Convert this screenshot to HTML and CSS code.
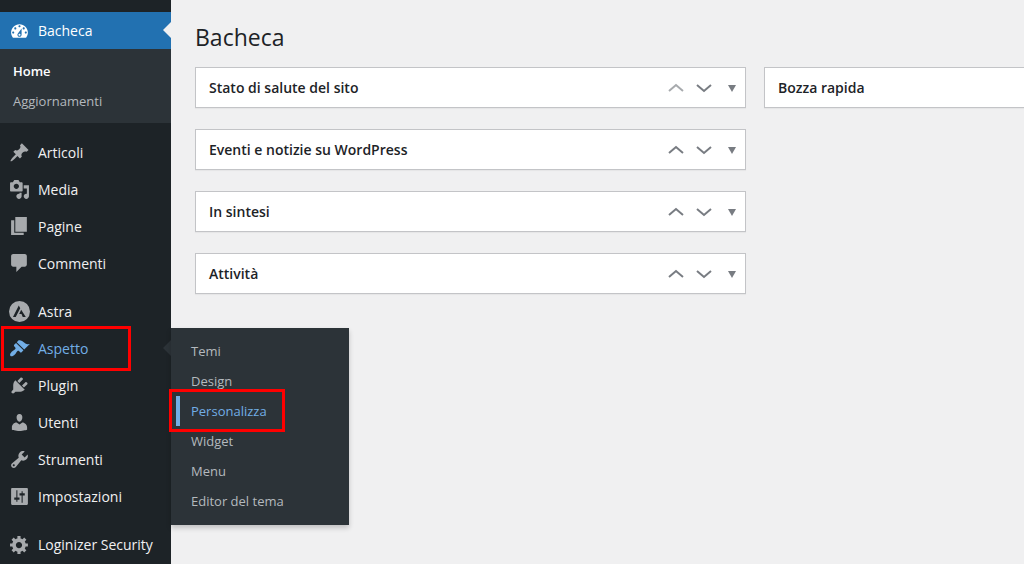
FILE: index.html
```html
<!DOCTYPE html>
<html lang="it">

<head>
    <meta charset="UTF-8">
    <meta name="viewport" content="width=device-width, initial-scale=1.0">
    <title>Bacheca</title>
    <link rel="stylesheet" href="styles.css">
</head>

<body>
    <div class="admin">
        <nav class="sidebar" aria-label="Menu principale">
            <ul class="menu">
                <li class="menu-item current">
                    <a class="menu-link" href="#">
                        <svg class="icon" viewBox="0 0 20 20"><path fill-rule="evenodd" d="M3.76 17h12.48c1.1-1.37 1.76-3.11 1.76-5 0-4.42-3.58-8-8-8s-8 3.58-8 8c0 1.89.66 3.63 1.76 5zM10 5c.55 0 1 .45 1 1s-.45 1-1 1-1-.45-1-1 .45-1 1-1zM6 7c.55 0 1 .45 1 1s-.45 1-1 1-1-.45-1-1 .45-1 1-1zm8 0c.55 0 1 .45 1 1s-.45 1-1 1-1-.45-1-1 .45-1 1-1zm-5.37 5.55L12 8v6c0 1.1-.9 2-2 2s-2-.9-2-2c0-.57.24-1.08.63-1.45zM4 11c.55 0 1 .45 1 1s-.45 1-1 1-1-.45-1-1 .45-1 1-1zm12 0c.55 0 1 .45 1 1s-.45 1-1 1-1-.45-1-1 .45-1 1-1zm-5 3c0-.55-.45-1-1-1s-1 .45-1 1 .45 1 1 1 1-.45 1-1z"/></svg>
                        <span>Bacheca</span>
                    </a>
                    <ul class="submenu">
                        <li><a class="active" href="#">Home</a></li>
                        <li><a href="#">Aggiornamenti</a></li>
                    </ul>
                </li>
                <li class="separator"></li>
                <li class="menu-item">
                    <a class="menu-link" href="#">
                        <svg class="icon" viewBox="0 0 20 20"><path d="M10.44 3.02l1.82-1.82 6.36 6.35-1.83 1.82c-1.05-.68-2.48-.57-3.41.36l-.75.75c-.92.93-1.04 2.35-.35 3.41l-1.83 1.82-2.41-2.41-2.8 2.79c-.42.42-3.38 2.71-3.8 2.29s1.86-3.39 2.28-3.81l2.79-2.79L4.1 9.36l1.83-1.82c1.05.69 2.48.57 3.4-.36l.75-.75c.93-.92 1.05-2.35.36-3.41z"/></svg>
                        <span>Articoli</span>
                    </a>
                </li>
                <li class="menu-item">
                    <a class="menu-link" href="#">
                        <svg class="icon" viewBox="0 0 20 20"><path fill-rule="evenodd" d="M13 11V4c0-.55-.45-1-1-1h-1.67L9 1H5L3.67 3H2c-.55 0-1 .45-1 1v7c0 .55.45 1 1 1h10c.55 0 1-.45 1-1zM7 4.5c1.38 0 2.5 1.12 2.5 2.5S8.38 9.5 7 9.5 4.5 8.38 4.5 7 5.62 4.5 7 4.5zM14 6h5v10.5c0 1.38-1.12 2.5-2.5 2.5S14 17.88 14 16.5s1.12-2.5 2.5-2.5c.17 0 .34.02.5.05V9h-3V6zm-4 8.05V13h2v3.5c0 1.38-1.12 2.5-2.5 2.5S7 17.88 7 16.5 8.12 14 9.5 14c.17 0 .34.02.5.05z"/></svg>
                        <span>Media</span>
                    </a>
                </li>
                <li class="menu-item">
                    <a class="menu-link" href="#">
                        <svg class="icon" viewBox="0 0 20 20"><path d="M6 15V1h11v14H6zm-1 1h9v2H2V4h3v12z"/></svg>
                        <span>Pagine</span>
                    </a>
                </li>
                <li class="menu-item">
                    <a class="menu-link" href="#">
                        <svg class="icon" viewBox="0 0 20 20"><path d="M4 1h11c1.1 0 2 .9 2 2v8c0 1.1-.9 2-2 2h-3l-5 5v-5H4c-1.1 0-2-.9-2-2V3c0-1.1.9-2 2-2z"/></svg>
                        <span>Commenti</span>
                    </a>
                </li>
                <li class="separator"></li>
                <li class="menu-item">
                    <a class="menu-link" href="#">
                        <svg class="icon" viewBox="0 0 20 20"><path fill-rule="evenodd" d="M10 0a10 10 0 1 1 0 20 10 10 0 0 1 0-20zM9.3 4.2L3.8 15.2h2.6L10.7 7zM11.6 8.4l-1.9 4h2.2l1.2 2.8h2.9z"/></svg>
                        <span>Astra</span>
                    </a>
                </li>
                <li class="menu-item open">
                    <a class="menu-link" href="#">
                        <svg class="icon" viewBox="0 0 20 20"><path d="M14.48 11.06L7.41 3.99l1.5-1.5c.5-.56 2.3-.47 3.51.32 1.21.8 1.43 1.28 2.91 2.1 1.18.64 2.45 1.26 4.45.85zm-.71.71L6.7 4.7 4.93 6.47c-.39.39-.39 1.02 0 1.41l1.06 1.06c.39.39.39 1.03 0 1.42-.6.6-1.43 1.11-2.21 1.69-.35.26-.7.53-1.01.84C1.43 14.23.4 16.08 1.4 17.07c.99 1 2.84-.03 4.18-1.36.31-.31.58-.66.85-1.02.57-.78 1.08-1.61 1.69-2.21.39-.39 1.02-.39 1.41 0l1.06 1.06c.39.39 1.02.39 1.41 0z"/></svg>
                        <span>Aspetto</span>
                    </a>
                    <ul class="flyout">
                        <li><a href="#">Temi</a></li>
                        <li><a href="#">Design</a></li>
                        <li class="selected"><a href="#">Personalizza</a></li>
                        <li><a href="#">Widget</a></li>
                        <li><a href="#">Menu</a></li>
                        <li><a href="#">Editor del tema</a></li>
                    </ul>
                </li>
                <li class="menu-item">
                    <a class="menu-link" href="#">
                        <svg class="icon" viewBox="0 0 20 20"><path d="M13.11 4.36L9.87 7.6 8 5.73l3.24-3.24c.35-.34 1.05-.2 1.56.32.52.51.66 1.21.31 1.55zm-8 1.77l.91-1.12 9.01 9.01-1.19.84c-.71.71-2.63 1.16-3.82 1.16H6.14L4.9 17.26c-.59.59-1.54.59-2.12 0-.59-.58-.59-1.53 0-2.12l1.24-1.24v-3.88c0-1.13.4-3.19 1.09-3.89zm7.26 3.97l3.24-3.24c.34-.35 1.04-.21 1.55.31.52.51.66 1.21.31 1.55l-3.24 3.25z"/></svg>
                        <span>Plugin</span>
                    </a>
                </li>
                <li class="menu-item">
                    <a class="menu-link" href="#">
                        <svg class="icon" viewBox="0 0 20 20"><path d="M10 9.25c-2.27 0-2.73-3.44-2.73-3.44C7 4.02 7.82 2 9.97 2c2.16 0 2.98 2.02 2.71 3.81 0 0-.41 3.44-2.68 3.44zm0 2.57L12.72 10c2.39 0 4.52 2.33 4.52 4.53v2.49s-3.65 1.13-7.24 1.13c-3.65 0-7.24-1.13-7.24-1.13v-2.49c0-2.25 1.94-4.48 4.47-4.48z"/></svg>
                        <span>Utenti</span>
                    </a>
                </li>
                <li class="menu-item">
                    <a class="menu-link" href="#">
                        <svg class="icon" viewBox="0 0 20 20"><path fill-rule="evenodd" d="M16.68 9.77c-1.34 1.34-3.3 1.67-4.95.99l-5.41 6.52c-.99.99-2.59.99-3.58 0s-.99-2.59 0-3.57l6.52-5.42c-.68-1.65-.35-3.61.99-4.95 1.28-1.28 3.12-1.62 4.72-1.06l-2.89 2.89 2.82 2.82 2.86-2.87c.53 1.58.18 3.39-1.08 4.65zM3.81 16.21c.4.39 1.04.39 1.43 0 .4-.4.4-1.04 0-1.43-.39-.4-1.03-.4-1.43 0-.39.39-.39 1.03 0 1.43z"/></svg>
                        <span>Strumenti</span>
                    </a>
                </li>
                <li class="menu-item">
                    <a class="menu-link" href="#">
                        <svg class="icon" viewBox="0 0 20 20"><path fill-rule="evenodd" d="M3 2h14c.55 0 1 .45 1 1v14c0 .55-.45 1-1 1H3c-.55 0-1-.45-1-1V3c0-.55.45-1 1-1zM7 4v7H5v2h2v2h1v-2h2v-2H8V4zM12 5v2h-2v2h2v7h1V9h2V7h-2V5z"/></svg>
                        <span>Impostazioni</span>
                    </a>
                </li>
                <li class="separator"></li>
                <li class="menu-item">
                    <a class="menu-link" href="#">
                        <svg class="icon" viewBox="0 0 20 20"><path fill-rule="evenodd" d="M18 12h-2.18c-.17.7-.44 1.35-.81 1.93l1.54 1.54-2.1 2.1-1.54-1.54c-.58.36-1.23.63-1.91.79V19H8v-2.18c-.68-.16-1.33-.43-1.91-.79l-1.54 1.54-2.12-2.12 1.54-1.54c-.36-.58-.63-1.23-.79-1.91H1V9.03h2.17c.16-.7.44-1.35.8-1.94L2.43 5.55l2.1-2.1 1.54 1.54c.58-.37 1.24-.64 1.93-.81V2h3v2.18c.68.16 1.33.43 1.91.79l1.54-1.54 2.12 2.12-1.54 1.54c.36.59.64 1.24.8 1.94H18V12zm-8.5 1.5c1.66 0 3-1.34 3-3s-1.34-3-3-3-3 1.34-3 3 1.34 3 3 3z"/></svg>
                        <span>Loginizer Security</span>
                    </a>
                </li>
            </ul>
        </nav>

        <main class="content">
            <h1>Bacheca</h1>
            <div class="widgets">
                <div class="column">
                    <section class="postbox">
                        <h2>Stato di salute del sito</h2>
                        <div class="actions">
                            <button type="button" aria-label="Sposta su" disabled><svg viewBox="0 0 16 16"><path class="chevron" d="M1 11l7-6 7 6"/></svg></button>
                            <button type="button" aria-label="Sposta giù"><svg viewBox="0 0 16 16"><path class="chevron" d="M1 5l7 6 7-6"/></svg></button>
                            <button type="button" aria-label="Apri o chiudi"><svg viewBox="0 0 16 16"><path d="M4 5h8l-4 7z"/></svg></button>
                        </div>
                    </section>
                    <section class="postbox">
                        <h2>Eventi e notizie su WordPress</h2>
                        <div class="actions">
                            <button type="button" aria-label="Sposta su"><svg viewBox="0 0 16 16"><path class="chevron" d="M1 11l7-6 7 6"/></svg></button>
                            <button type="button" aria-label="Sposta giù"><svg viewBox="0 0 16 16"><path class="chevron" d="M1 5l7 6 7-6"/></svg></button>
                            <button type="button" aria-label="Apri o chiudi"><svg viewBox="0 0 16 16"><path d="M4 5h8l-4 7z"/></svg></button>
                        </div>
                    </section>
                    <section class="postbox">
                        <h2>In sintesi</h2>
                        <div class="actions">
                            <button type="button" aria-label="Sposta su"><svg viewBox="0 0 16 16"><path class="chevron" d="M1 11l7-6 7 6"/></svg></button>
                            <button type="button" aria-label="Sposta giù"><svg viewBox="0 0 16 16"><path class="chevron" d="M1 5l7 6 7-6"/></svg></button>
                            <button type="button" aria-label="Apri o chiudi"><svg viewBox="0 0 16 16"><path d="M4 5h8l-4 7z"/></svg></button>
                        </div>
                    </section>
                    <section class="postbox">
                        <h2>Attività</h2>
                        <div class="actions">
                            <button type="button" aria-label="Sposta su"><svg viewBox="0 0 16 16"><path class="chevron" d="M1 11l7-6 7 6"/></svg></button>
                            <button type="button" aria-label="Sposta giù"><svg viewBox="0 0 16 16"><path class="chevron" d="M1 5l7 6 7-6"/></svg></button>
                            <button type="button" aria-label="Apri o chiudi"><svg viewBox="0 0 16 16"><path d="M4 5h8l-4 7z"/></svg></button>
                        </div>
                    </section>
                </div>
                <div class="column">
                    <section class="postbox">
                        <h2>Bozza rapida</h2>
                    </section>
                </div>
            </div>
        </main>
    </div>
</body>

</html>
```
FILE: styles.css
```css
* {
    box-sizing: border-box;
}

body {
    margin: 0;
    background: #f0f0f1;
    color: #1d2327;
    font-family: "Segoe UI", "Open Sans", "Noto Sans", sans-serif;
    font-size: 14px;
}

ul {
    list-style: none;
    margin: 0;
    padding: 0;
}

a {
    text-decoration: none;
}

.admin {
    display: flex;
    min-height: 100vh;
}

/* Sidebar */
.sidebar {
    flex: 0 0 171px;
    padding-top: 12px;
    background: #1d2327;
}

.menu-item {
    position: relative;
}

.menu-link {
    display: flex;
    align-items: center;
    gap: 8px;
    height: 37px;
    padding-left: 9px;
    color: #f0f0f1;
    white-space: nowrap;
}

.icon {
    flex: none;
    width: 21px;
    height: 21px;
    fill: #a7aaad;
}

.separator {
    height: 11px;
}

.current > .menu-link {
    background: #2271b1;
    color: #fff;
}

.current .icon {
    fill: #fff;
}

/* Notch that points at the open page */
.current::after {
    content: "";
    position: absolute;
    top: 10px;
    right: 0;
    border: 8px solid transparent;
    border-left-width: 0;
    border-right-color: #f0f0f1;
}

.submenu {
    padding: 7px 13px;
    background: #2c3338;
}

.submenu a,
.flyout a {
    display: block;
    color: #b4b9be;
    font-size: 13px;
    line-height: 30px;
}

.submenu .active {
    color: #fff;
    font-weight: 600;
}

.open > .menu-link {
    color: #72aee6;
}

.open .icon {
    fill: #72aee6;
}

.open::before {
    content: "";
    position: absolute;
    top: 10px;
    right: 0;
    border: 8px solid transparent;
    border-left-width: 0;
    border-right-color: #2c3338;
}

/* Red frames around the steps to follow */
.open::after,
.selected::after {
    content: "";
    position: absolute;
    border: 3px solid #f00;
    pointer-events: none;
}

.open::after {
    inset: -4px 40px -4px 1px;
}

.flyout {
    position: absolute;
    top: -2px;
    left: 100%;
    z-index: 1;
    width: 178px;
    padding: 8px 0 9px;
    background: #2c3338;
    box-shadow: 0 3px 5px rgba(0, 0, 0, 0.2);
}

.flyout a {
    padding-left: 20px;
}

.selected {
    position: relative;
}

.selected a {
    margin-left: 5px;
    padding-left: 11px;
    border-left: 4px solid #72aee6;
    color: #72aee6;
}

.selected::after {
    inset: -7px 64px -6px -2px;
}

/* Content */
.content {
    flex: 1;
    min-width: 0;
    padding: 20px 0 0 24px;
    overflow: hidden;
}

h1 {
    margin: 0 0 13px;
    font-size: 23px;
    font-weight: 400;
    line-height: 34px;
}

.widgets {
    display: grid;
    grid-template-columns: repeat(2, minmax(551px, 1fr));
    gap: 18px;
}

.column {
    display: flex;
    flex-direction: column;
    gap: 21px;
}

.postbox {
    display: flex;
    align-items: center;
    justify-content: space-between;
    padding: 0 5px 0 13px;
    background: #fff;
    border: 1px solid #c3c4c7;
    box-shadow: 0 1px 1px rgba(0, 0, 0, 0.04);
}

h2 {
    margin: 0;
    font-size: 14px;
    font-weight: 600;
    line-height: 39px;
}

.actions {
    display: flex;
}

.actions button {
    display: flex;
    justify-content: center;
    width: 28px;
    padding: 0;
    border: 0;
    background: none;
    color: #787c82;
}

.actions button:last-child {
    width: 16px;
    margin-left: 6px;
}

.actions button:disabled {
    color: #a7aaad;
}

.actions svg {
    width: 16px;
    height: 16px;
    fill: currentColor;
}

.actions .chevron {
    fill: none;
    stroke: currentColor;
    stroke-width: 2;
}
```
